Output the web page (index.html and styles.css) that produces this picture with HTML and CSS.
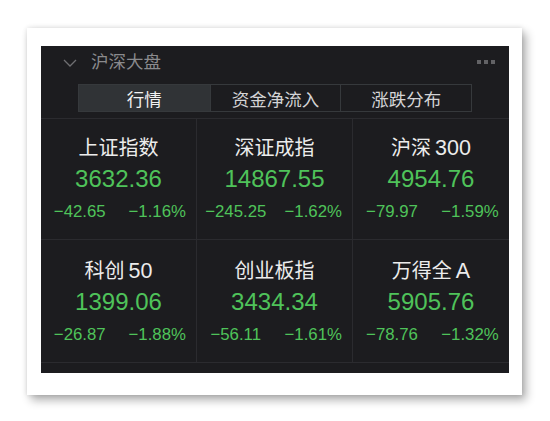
FILE: index.html
```html
<!DOCTYPE html>
<html lang="zh-CN">
<head>
<meta charset="utf-8">
<title>沪深大盘</title>
<link rel="stylesheet" href="styles.css">
</head>
<body>
<div class="frame">
  <div class="panel">
    <div class="header">
      <svg class="chevron" width="14" height="8" viewBox="0 0 14 8"><path d="M1 1 L7 7 L13 1" fill="none" stroke="#6f6f72" stroke-width="1.3"/></svg>
      <span class="title">沪深大盘</span>
      <span class="dots"><i></i><i></i><i></i></span>
    </div>
    <div class="tabs">
      <div class="tab active">行情</div>
      <div class="tab">资金净流入</div>
      <div class="tab">涨跌分布</div>
    </div>
    <div class="grid">
      <div class="cell">
        <div class="name">上证指数</div>
        <div class="value">3632.36</div>
        <div class="change"><span>−42.65</span><span>−1.16%</span></div>
      </div>
      <div class="cell">
        <div class="name">深证成指</div>
        <div class="value">14867.55</div>
        <div class="change"><span>−245.25</span><span>−1.62%</span></div>
      </div>
      <div class="cell last">
        <div class="name">沪深<span class="num">300</span></div>
        <div class="value">4954.76</div>
        <div class="change"><span>−79.97</span><span>−1.59%</span></div>
      </div>
      <div class="cell row2">
        <div class="name">科创<span class="num">50</span></div>
        <div class="value">1399.06</div>
        <div class="change"><span>−26.87</span><span>−1.88%</span></div>
      </div>
      <div class="cell row2">
        <div class="name">创业板指</div>
        <div class="value">3434.34</div>
        <div class="change"><span>−56.11</span><span>−1.61%</span></div>
      </div>
      <div class="cell row2 last">
        <div class="name">万得全<span class="num">A</span></div>
        <div class="value">5905.76</div>
        <div class="change"><span>−78.76</span><span>−1.32%</span></div>
      </div>
    </div>
  </div>
</div>
</body>
</html>
```

FILE: styles.css
```css
* { box-sizing: border-box; }
html, body {
  margin: 0;
  padding: 0;
  background: #ffffff;
  width: 550px;
  height: 421px;
  overflow: hidden;
  font-family: "Liberation Sans", "Noto Sans CJK SC", sans-serif;
}
body {
  padding: 28px 0 0 27px;
}
.frame {
  width: 495px;
  height: 367px;
  background: #ffffff;
  padding: 18px 13px 22px 14px;
  box-shadow: 4px 5px 9px rgba(0,0,0,0.32), 0 0 5px rgba(0,0,0,0.12);
}
.panel {
  width: 468px;
  height: 327px;
  background: #1c1c1f;
  display: flex;
  flex-direction: column;
}
.header {
  height: 32px;
  display: flex;
  align-items: center;
  padding: 0 14px 0 22px;
}
.chevron {
  display: block;
  margin-top: 1px;
}
.title {
  margin-left: 14px;
  font-size: 17.5px;
  color: #8a8a8d;
  line-height: 24px;
}
.dots {
  margin-left: auto;
  display: flex;
  gap: 3px;
}
.dots i {
  display: block;
  width: 4px;
  height: 4px;
  background: #626265;
}
.tabs {
  margin: 6px auto 0;
  width: 394px;
  height: 28px;
  display: grid;
  grid-template-columns: repeat(3, 1fr);
  border: 1px solid #36393c;
}
.tab {
  display: flex;
  align-items: center;
  justify-content: center;
  font-size: 17.5px;
  color: #d4d4d6;
  border-left: 1px solid #36393c;
}
.tab:first-child { border-left: none; }
.tab.active {
  background: #303336;
  color: #f2f2f2;
}
.grid {
  margin-top: 6px;
  display: grid;
  grid-template-columns: repeat(3, 1fr);
  border-top: 1px solid #2b2b2f;
}
.cell {
  height: 121px;
  border-right: 1px solid #2b2b2f;
  border-bottom: 1px solid #2b2b2f;
  padding-top: 15px;
  text-align: center;
}
.cell.last { border-right: none; }
.cell.row2 {
  height: 123px;
  padding-top: 17px;
}
.name {
  font-size: 20px;
  line-height: 28px;
  color: #ececec;
}
.name .num {
  font-size: 21.5px;
  margin-left: 4px;
}
.value {
  margin-top: 2px;
  font-size: 24px;
  line-height: 30px;
  color: #4fc35a;
}
.change {
  margin-top: 7px;
  display: grid;
  grid-template-columns: 1fr 1fr;
  font-size: 16.8px;
  line-height: 22px;
  color: #4fc35a;
}
```
